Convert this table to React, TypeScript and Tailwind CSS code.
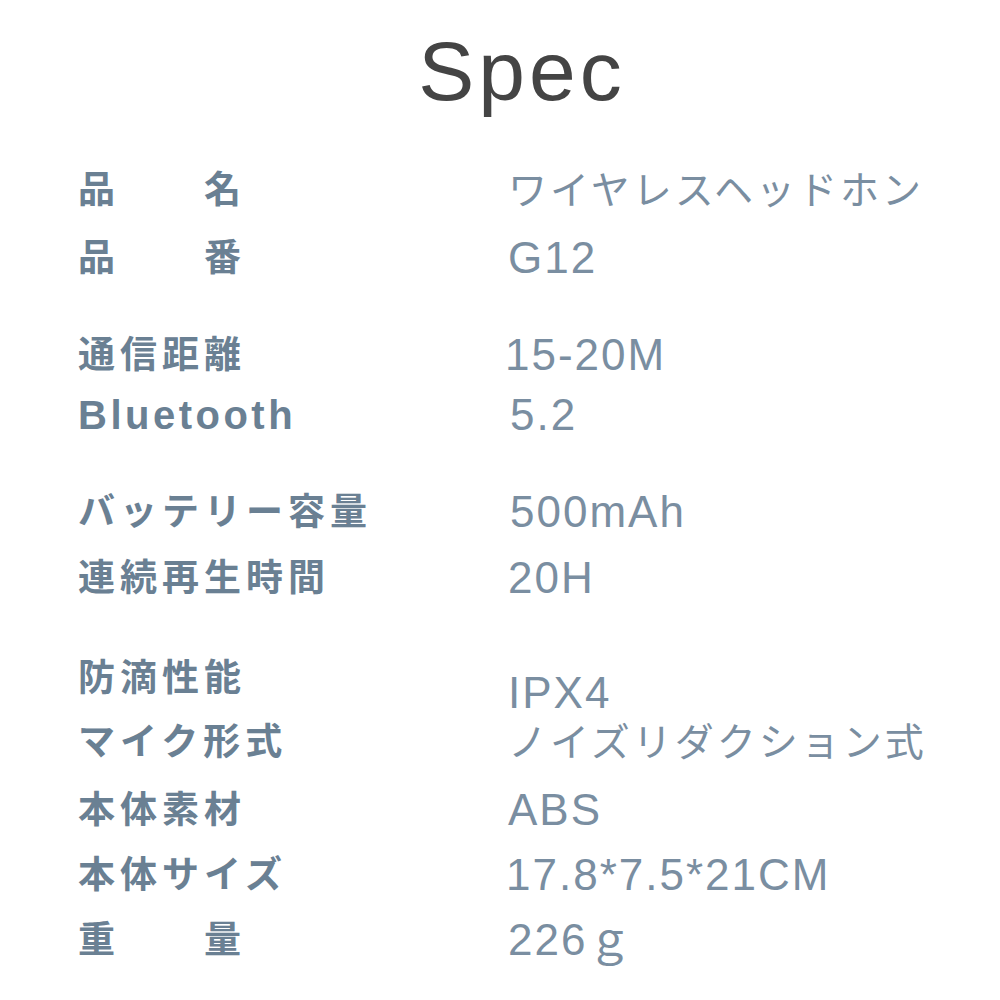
const specs = [
  { label: '品　　名', value: 'ワイヤレスヘッドホン', kana: true, top: 0 },
  { label: '品　　番', value: 'G12', top: 4 },
  { label: '通信距離', value: '15-20M', top: 33, shift: 'ml-[-3px]' },
  { label: 'Bluetooth', value: '5.2', top: -4, shift: 'ml-[2px]', latin: true },
  { label: 'バッテリー容量', value: '500mAh', top: 33, shift: 'ml-[2px]' },
  { label: '連続再生時間', value: '20H', top: 2 },
  { label: '防滴性能', value: 'IPX4', top: 36, drop: true },
  { label: 'マイク形式', value: 'ノイズリダクション式', kana: true, top: 0 },
  { label: '本体素材', value: 'ABS', top: 4 },
  { label: '本体サイズ', value: '17.8*7.5*21CM', top: 1, shift: 'ml-[-2px]' },
  { label: '重　　量', value: '226ｇ', top: 1 },
];

export default function App() {
  return (
    <div className="w-[1000px] h-[1000px] bg-white overflow-hidden">
      <h1 className="pt-[29px] pl-[44px] text-center text-[84px] leading-none tracking-[4px] text-[#444444] font-['Liberation_Sans',sans-serif]">
        Spec
      </h1>

      <div className="mt-[45px] flex flex-col">
        {specs.map((s) => (
          <div
            key={s.label}
            className="flex items-center h-[64px]"
            style={{ marginTop: s.top }}
          >
            <span
              className={`w-[508px] shrink-0 pl-[78px] leading-none font-bold text-[#6a8093] font-['Liberation_Sans','Noto_Sans_CJK_JP',sans-serif] whitespace-nowrap ${
                s.latin ? 'text-[40px] tracking-[3.5px]' : 'text-[37px] tracking-[5px]'
              }`}
            >
              {s.label}
            </span>
            <span
              className={`whitespace-nowrap leading-none text-[#7a8ea1] font-['Liberation_Sans','Noto_Sans_CJK_JP',sans-serif] ${
                s.kana ? 'text-[39px] tracking-[3px]' : 'text-[44px] tracking-[2px]'
              } ${s.drop ? 'pt-[30px]' : ''} ${s.shift ?? ''}`}
            >
              {s.value}
            </span>
          </div>
        ))}
      </div>
    </div>
  );
}
